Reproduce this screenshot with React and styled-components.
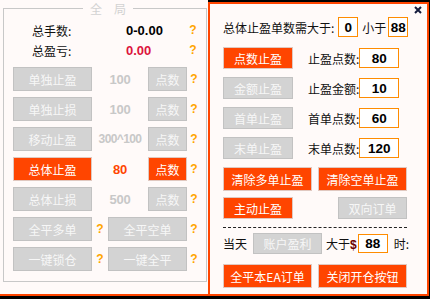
import React from "react";
import styled, { createGlobalStyle } from "styled-components";

const GlobalStyle = createGlobalStyle`
    html, body {
        margin: 0;
        padding: 0;
        background: #000;
        overflow: hidden;
    }
    body {
        font-family: "Noto Sans CJK SC", "Liberation Sans", sans-serif;
        font-size: 12px;
    }
`;

const Screen = styled.div`
    display: flex;
    align-items: flex-start;
    width: 430px;
    height: 299px;
`;

const LeftPanel = styled.div`
    box-sizing: border-box;
    width: 208px;
    height: 296px;
    padding: 0 1px 0 3px;
    background: #fffaf9;
    border-bottom: 2px solid #ff4500;
`;

const Frame = styled.fieldset`
    box-sizing: border-box;
    margin: 0;
    padding: 0 0 0 9px;
    min-width: 0;
    height: 282px;
    border: 1px solid #c8c8c8;
`;

const Legend = styled.legend`
    margin-left: 70px;
    padding: 0 7px;
    font-size: 12px;
    color: #d2d2d2;
    letter-spacing: 12px;
    & span { letter-spacing: 0; }
`;

const Stats = styled.div`
    display: flex;
    flex-direction: column;
    margin-top: 3px;
    margin-bottom: 7px;
`;

const StatRow = styled.div`
    display: grid;
    grid-template-columns: 94px 60px 14px;
    align-items: center;
    height: 20px;
    padding-left: 19px;
`;

const StatLabel = styled.span`
    color: #111;
    font-size: 12px;
`;

const StatValue = styled.span`
    font-family: "Liberation Sans", sans-serif;
    font-weight: bold;
    font-size: 13px;
    color: ${(p) => p.$color || "#000"};
`;

const Rows = styled.div`
    display: flex;
    flex-direction: column;
    gap: 6px;
`;

const Row = styled.div`
    display: flex;
    align-items: center;
    height: ${(p) => p.$h || 24}px;
    margin-top: ${(p) => p.$mt || 0}px;
`;

const Btn = styled.div`
    box-sizing: border-box;
    display: flex;
    align-items: center;
    justify-content: center;
    flex: none;
    width: ${(p) => p.$w}px;
    height: ${(p) => p.$h || 24}px;
    background: ${(p) => (p.$on ? "#ff4500" : "#d3d3d3")};
    border: 1px solid ${(p) => (p.$on ? "#e0c8c0" : "#c2c2c2")};
    color: ${(p) => (p.$on ? "#fff" : "#f7f7f7")};
    font-size: 12px;
    margin-left: ${(p) => p.$ml || 0}px;
`;

const Value = styled.span`
    flex: none;
    width: 56px;
    text-align: center;
    font-family: "Liberation Sans", sans-serif;
    font-weight: bold;
    font-size: ${(p) => (p.$small ? 12 : 13)}px;
    letter-spacing: ${(p) => (p.$small ? -0.6 : -0.3)}px;
    color: ${(p) => p.$color || "#c8c8c8"};
    white-space: nowrap;
`;

const Help = styled.span`
    flex: none;
    width: ${(p) => p.$w || 14}px;
    text-align: center;
    font-family: "Liberation Sans", sans-serif;
    font-weight: bold;
    font-size: 12px;
    color: #ffa500;
`;

const RightPanel = styled.div`
    position: relative;
    box-sizing: border-box;
    width: 221px;
    height: 294px;
    margin-top: 2px;
    padding: 13px 20px 0 13px;
    background: #fffaf9;
    border: 2px solid #ff4500;
    display: flex;
    flex-direction: column;
`;

const Close = styled.svg`
    position: absolute;
    top: 2px;
    right: 5px;
`;

const Label = styled.span`
    flex: none;
    color: #111;
    font-size: 12px;
    margin-left: ${(p) => p.$ml || 0}px;
    & b {
        font-family: "Liberation Sans", sans-serif;
        color: #6b0000;
    }
`;

const Input = styled.div`
    box-sizing: border-box;
    display: flex;
    align-items: center;
    justify-content: center;
    flex: none;
    width: ${(p) => p.$w}px;
    height: ${(p) => p.$h || 20}px;
    margin-left: ${(p) => p.$ml || 0}px;
    background: #fff;
    border: 1px solid #ff8c00;
    font-family: "Liberation Sans", sans-serif;
    font-weight: bold;
    font-size: 13.5px;
    color: #000;
`;

const Dashed = styled.div`
    margin-top: 8px;
    width: 184px;
    border-top: 1px dashed #222;
`;

const ParamRow = ({ btn, on, label, value, mt = 8 }) => (
    <Row $h={22} $mt={mt}>
        <Btn $w={70} $h={22} $on={on}>{btn}</Btn>
        <Label $ml={15}>{label}</Label>
        <Input $w={40} $ml="auto">{value}</Input>
    </Row>
);

const ActionRow = ({ btn, on, value, valueColor, small }) => (
    <Row>
        <Btn $w={79} $on={on}>{btn}</Btn>
        <Value $color={valueColor} $small={small}>{value}</Value>
        <Btn $w={39} $on={on}>点数</Btn>
        <Help>?</Help>
    </Row>
);

const App = () => {
    return (
        <Screen>
            <GlobalStyle />
            <LeftPanel>
                <Frame>
                    <Legend>全<span>局</span></Legend>
                    <Stats>
                        <StatRow>
                            <StatLabel>总手数:</StatLabel>
                            <StatValue>0-0.00</StatValue>
                            <Help>?</Help>
                        </StatRow>
                        <StatRow>
                            <StatLabel>总盈亏:</StatLabel>
                            <StatValue $color="#dc143c">0.00</StatValue>
                            <Help>?</Help>
                        </StatRow>
                    </Stats>
                    <Rows>
                        <ActionRow btn="单独止盈" value="100" />
                        <ActionRow btn="单独止损" value="100" />
                        <ActionRow btn="移动止盈" value="300^100" small />
                        <ActionRow btn="总体止盈" value="80" valueColor="#ff4500" on />
                        <ActionRow btn="总体止损" value="500" />
                        <Row>
                            <Btn $w={79}>全平多单</Btn>
                            <Help $w={16}>?</Help>
                            <Btn $w={79}>全平空单</Btn>
                            <Help>?</Help>
                        </Row>
                        <Row>
                            <Btn $w={79}>一键锁仓</Btn>
                            <Help $w={16}>?</Help>
                            <Btn $w={79}>一键全平</Btn>
                            <Help>?</Help>
                        </Row>
                    </Rows>
                </Frame>
            </LeftPanel>
            <RightPanel>
                <Close width="8" height="8" viewBox="0 0 8 8">
                    <path d="M1 1L7 7M7 1L1 7" stroke="#141a3c" strokeWidth="2" />
                </Close>
                <Row $h={20}>
                    <Label>总体止盈单数需大于:</Label>
                    <Input $w={20} $ml={4}>0</Input>
                    <Label $ml={4}>小于</Label>
                    <Input $w={20} $ml={2}>88</Input>
                </Row>
                <ParamRow btn="点数止盈" label="止盈点数:" value="80" on mt={10} />
                <ParamRow btn="金额止盈" label="止盈金额:" value="10" />
                <ParamRow btn="首单止盈" label="首单点数:" value="60" />
                <ParamRow btn="末单止盈" label="末单点数:" value="120" />
                <Row $mt={8}>
                    <Btn $w={89} $on>清除多单止盈</Btn>
                    <Btn $w={89} $ml={6} $on>清除空单止盈</Btn>
                </Row>
                <Row $h={22} $mt={6}>
                    <Btn $w={70} $h={22} $on>主动止盈</Btn>
                    <Btn $w={69} $h={22} $ml={45}>双向订单</Btn>
                </Row>
                <Dashed />
                <Row $h={21} $mt={5}>
                    <Label>当天</Label>
                    <Btn $w={69} $h={21} $ml={6}>账户盈利</Btn>
                    <Label $ml={4}>大于<b>$</b></Label>
                    <Input $w={30} $h={19} $ml={1}>88</Input>
                    <Label $ml={6}>时:</Label>
                </Row>
                <Row $mt={10}>
                    <Btn $w={89} $on>全平本EA订单</Btn>
                    <Btn $w={89} $ml={6} $on>关闭开仓按钮</Btn>
                </Row>
            </RightPanel>
        </Screen>
    );
};

export default App;
